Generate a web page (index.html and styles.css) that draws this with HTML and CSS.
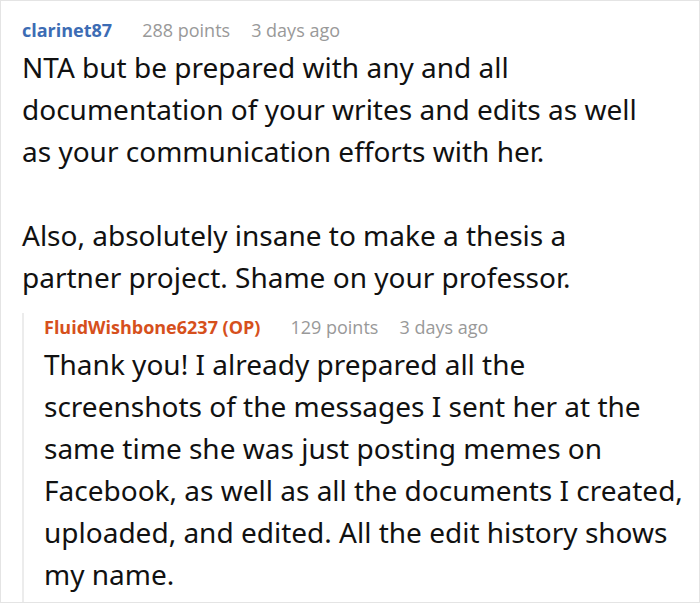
FILE: index.html
```html
<!DOCTYPE html>
<html>
<head>
<meta charset="utf-8">
<link rel="stylesheet" href="styles.css">
</head>
<body>
<div class="frame">
  <div class="comment">
    <div class="meta">
      <span class="user">clarinet87</span>
      <span class="info">288 points</span>
      <span class="info">3 days ago</span>
    </div>
    <div class="body">
      <p>NTA but be prepared with any and all documentation of your writes and edits as well as your communication efforts with her.</p>
      <p>Also, absolutely insane to make a thesis a partner project. Shame on your professor.</p>
    </div>
    <div class="reply">
      <div class="meta">
        <span class="user op">FluidWishbone6237 (OP)</span>
        <span class="info">129 points</span>
        <span class="info">3 days ago</span>
      </div>
      <div class="body">
        <p>Thank you! I already prepared all the<br>screenshots of the messages I sent her at the<br>same time she was just posting memes on<br>Facebook, as well as all the documents I created,<br>uploaded, and edited. All the edit history shows<br>my name.</p>
      </div>
    </div>
  </div>
</div>
</body>
</html>
```

FILE: styles.css
```css
html, body {
  margin: 0;
  padding: 0;
  background: #ffffff;
}
.frame {
  width: 700px;
  height: 603px;
  box-sizing: border-box;
  border: 1px solid #e4e4e4;
  overflow: hidden;
  font-family: "Open Sans", "Noto Sans", sans-serif;
}
.comment {
  width: 644px;
  padding: 15px 0 0 21px;
}
.meta {
  display: flex;
  font-size: 18px;
  line-height: 28px;
  height: 28px;
  margin-bottom: 2px;
}
.user {
  font-weight: 700;
  color: #3c6cb4;
  margin-right: 30px;
}
.user.op {
  color: #d6501c;
}
.info {
  color: #999999;
  margin-right: 21px;
}
.body p {
  margin: 0 0 42px 0;
  font-family: "Noto Sans", "Open Sans", sans-serif;
  font-size: 28px;
  line-height: 42px;
  color: #111111;
}
.body p:last-child {
  margin-bottom: 0;
}
.reply {
  margin-top: 15px;
  border-left: 2px solid #ececec;
  padding-left: 20px;
}
.reply .body p {
  white-space: nowrap;
  padding-bottom: 10px;
}
```
